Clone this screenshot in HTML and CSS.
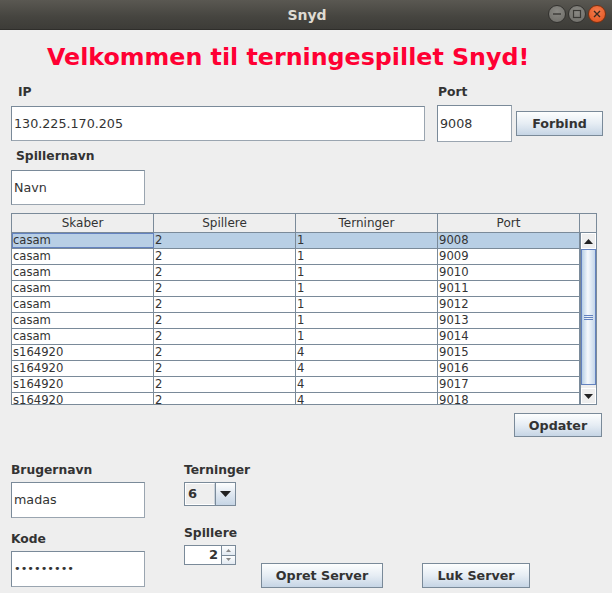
FILE: index.html
```html
<!DOCTYPE html>
<html>
<head>
<meta charset="utf-8">
<link rel="stylesheet" href="styles.css">
</head>
<body>
<div class="window">
  <div class="titlebar">
    <span class="title">Snyd</span>
    <div class="wbtns">
      <span class="wbtn"><svg width="10" height="10" viewBox="0 0 10 10"><path d="M1 5h8" stroke="#3a3935" stroke-width="1.4"/></svg></span>
      <span class="wbtn"><svg width="10" height="10" viewBox="0 0 10 10"><rect x="1.5" y="1.5" width="7" height="7" fill="none" stroke="#3a3935" stroke-width="1.2"/></svg></span>
      <span class="wbtn close"><svg width="10" height="10" viewBox="0 0 10 10"><path d="M2 2l6 6M8 2l-6 6" stroke="#3a2a20" stroke-width="1.4"/></svg></span>
    </div>
  </div>
  <div class="content">
    <h1 class="heading">Velkommen til terningespillet Snyd!</h1>
    <div class="row labels1">
      <span class="lbl lbl-ip">IP</span>
      <span class="lbl lbl-port">Port</span>
    </div>
    <div class="row fields1">
      <div class="field f-ip">130.225.170.205</div>
      <div class="field f-port">9008</div>
      <button class="btn b-forbind">Forbind</button>
    </div>
    <div class="lbl lbl-spiller">Spillernavn</div>
    <div class="field f-navn">Navn</div>

    <div class="table">
      <div class="thead">
        <span class="th">Skaber</span><span class="th">Spillere</span><span class="th">Terninger</span><span class="th">Port</span><span class="th th-corner"></span>
      </div>
      <div class="tbody">
        <div class="rows">
          <div class="tr sel"><span class="td focus">casam</span><span class="td">2</span><span class="td">1</span><span class="td">9008</span></div>
          <div class="tr"><span class="td">casam</span><span class="td">2</span><span class="td">1</span><span class="td">9009</span></div>
          <div class="tr"><span class="td">casam</span><span class="td">2</span><span class="td">1</span><span class="td">9010</span></div>
          <div class="tr"><span class="td">casam</span><span class="td">2</span><span class="td">1</span><span class="td">9011</span></div>
          <div class="tr"><span class="td">casam</span><span class="td">2</span><span class="td">1</span><span class="td">9012</span></div>
          <div class="tr"><span class="td">casam</span><span class="td">2</span><span class="td">1</span><span class="td">9013</span></div>
          <div class="tr"><span class="td">casam</span><span class="td">2</span><span class="td">1</span><span class="td">9014</span></div>
          <div class="tr"><span class="td">s164920</span><span class="td">2</span><span class="td">4</span><span class="td">9015</span></div>
          <div class="tr"><span class="td">s164920</span><span class="td">2</span><span class="td">4</span><span class="td">9016</span></div>
          <div class="tr"><span class="td">s164920</span><span class="td">2</span><span class="td">4</span><span class="td">9017</span></div>
          <div class="tr"><span class="td">s164920</span><span class="td">2</span><span class="td">4</span><span class="td">9018</span></div>
        </div>
        <div class="scrollbar">
          <div class="sb-btn"><svg width="9" height="5" viewBox="0 0 9 5"><path d="M0 5L4.5 0L9 5Z" fill="#222"/></svg></div>
          <div class="sb-track">
            <div class="sb-thumb"><span class="grip"></span></div>
          </div>
          <div class="sb-btn"><svg width="9" height="5" viewBox="0 0 9 5"><path d="M0 0L4.5 5L9 0Z" fill="#222"/></svg></div>
        </div>
      </div>
    </div>

    <div class="row opd-row">
      <button class="btn b-opdater">Opdater</button>
    </div>

    <div class="row bottom">
      <div class="col col-left">
        <div class="lbl lbl-bruger">Brugernavn</div>
        <div class="field f-small">madas</div>
        <div class="lbl lbl-kode">Kode</div>
        <div class="field f-small f-pass">•••••••••</div>
      </div>
      <div class="col col-mid">
        <div class="lbl lbl-tern">Terninger</div>
        <div class="combo"><span class="combo-val">6</span><span class="combo-btn"><svg width="11" height="6" viewBox="0 0 11 6"><path d="M0 0L5.5 6L11 0Z" fill="#222"/></svg></span></div>
        <div class="lbl lbl-spil">Spillere</div>
        <div class="spinner"><span class="spin-val">2</span><span class="spin-btns"><span class="spin-b"><svg width="5" height="3" viewBox="0 0 5 3"><path d="M0 3L2.5 0L5 3Z" fill="#888"/></svg></span><span class="spin-b spin-b2"><svg width="5" height="3" viewBox="0 0 5 3"><path d="M0 0L2.5 3L5 0Z" fill="#888"/></svg></span></span></div>
      </div>
      <div class="col col-btns">
        <button class="btn b-opret">Opret Server</button>
        <button class="btn b-luk">Luk Server</button>
      </div>
    </div>
  </div>
</div>
</body>
</html>
```
FILE: styles.css
```css
* { box-sizing: border-box; }
html, body { margin: 0; padding: 0; }
body { width: 612px; height: 593px; overflow: hidden; font-family: "DejaVu Sans", sans-serif; color: #333; }
.window { width: 612px; height: 593px; display: flex; flex-direction: column; }
.titlebar {
  height: 30px; flex: none; position: relative;
  background: linear-gradient(#5a5852, #45443f 60%, #3d3c38);
  display: flex; align-items: center; justify-content: center;
  border-bottom: 1px solid #2f2e2b;
}
.title { font-weight: bold; font-size: 14px; color: #dfdbd2; margin-left: 2px; }
.wbtns { position: absolute; right: 6px; top: 5px; display: flex; gap: 2px; }
.wbtn {
  width: 18px; height: 18px; border-radius: 50%;
  background: radial-gradient(circle at 50% 35%, #8a8984, #6c6b66);
  border: 1px solid #33322f;
  display: flex; align-items: center; justify-content: center;
}
.wbtn.close { background: radial-gradient(circle at 50% 35%, #f37d4f, #e2501a); border-color: #7a3010; }
.content { flex: 1; background: #eeeeee; position: relative; }
.heading {
  margin: 0; padding: 11px 0 0 47px; height: 54px;
  font-size: 23.75px; font-weight: bold; color: #ff0033; line-height: 32px;
}
.row { display: flex; }
.lbl { font-weight: bold; font-size: 12.3px; line-height: 16px; color: #333; }
.labels1 { height: 21px; }
.lbl-ip { margin-left: 18px; width: 420px; }
.lbl-port { margin-left: 0; }
.field {
  background: #fff; border: 1px solid #7a8a99; border-right-color: #9aa5b0; border-bottom-color: #9aa5b0;
  font-size: 12.7px; line-height: 16px; color: #333; padding-left: 2px;
  display: flex; align-items: center;
}
.fields1 { height: 37px; align-items: flex-start; }
.f-ip { margin-left: 11px; width: 414px; height: 35px; margin-top: 1px; }
.f-port { margin-left: 12px; width: 75px; height: 37px; }
.btn {
  font-family: "DejaVu Sans", sans-serif; font-weight: bold; font-size: 12.7px; color: #333;
  background: linear-gradient(#fdfefe, #e6edf4 50%, #c6d5e5);
  border: 1px solid #7a8a99; padding: 0; margin: 0;
}
.b-forbind { margin-left: 4px; width: 87px; height: 25px; margin-top: 6px; }
.lbl-spiller { margin: 6px 0 0 16px; height: 16px; }
.f-navn { margin: 6px 0 0 11px; width: 134px; height: 35px; }

.table { margin: 8px 0 0 11px; width: 586px; height: 192px; border: 1px solid #7a8a99; display: flex; flex-direction: column; background: #fff; }
.thead { display: flex; height: 19px; flex: none; background: #eeeeee; border-bottom: 1px solid #7a8a99; }
.th { width: 142px; font-size: 12px; line-height: 18px; text-align: center; border-right: 1px solid #7a8a99; color: #333; }
.th-corner { width: 16px; border-right: none; }
.tbody { flex: 1; display: flex; overflow: hidden; }
.rows { width: 568px; overflow: hidden; }
.tr { display: flex; height: 16px; border-bottom: 1px solid #7a8a99; }
.td { width: 142px; font-size: 11.6px; line-height: 15px; padding-left: 1px; border-right: 1px solid #7a8a99; color: #333; }
.tr.sel { background: #b8cfe5; }
.td.focus { border: 1px solid #6382bf; line-height: 13px; padding-left: 0; }
.scrollbar { width: 16px; display: flex; flex-direction: column; background: #eeeeee; border-left: 1px solid #7a8a99; }
.sb-btn { height: 16px; flex: none; display: flex; align-items: center; justify-content: center; background: #eeeeee; border: 1px solid #fff; }
.sb-track { flex: 1; padding: 0 0 3px 0; display: flex; flex-direction: column; }
.sb-thumb {
  flex: 1; border: 1px solid #6382bf;
  background: linear-gradient(90deg, #b8cfe5, #f6f9fc 45%, #c4d6ea);
  display: flex; align-items: center; justify-content: center;
}
.grip { width: 9px; height: 5px; border-top: 1px solid #6382bf; border-bottom: 1px solid #6382bf; position: relative; }
.grip::after { content: ""; position: absolute; left: 0; right: 0; top: 1px; height: 1px; background: #6382bf; }

.opd-row { justify-content: flex-end; padding-right: 10px; margin-top: 8px; }
.b-opdater { width: 88px; height: 24px; }

.bottom { margin-top: 25px; align-items: flex-start; }
.col { display: flex; flex-direction: column; }
.col-left { margin-left: 11px; width: 134px; }
.lbl-bruger { height: 16px; }
.f-small { width: 134px; height: 36px; margin-top: 4px; }
.lbl-kode { margin-top: 13px; height: 16px; }
.f-pass { margin-top: 4px; font-size: 11.3px; letter-spacing: 0; }
.col-mid { margin-left: 39px; width: 60px; }
.lbl-tern { height: 16px; }
.combo { margin-top: 4px; width: 52px; height: 24px; display: flex; border: 1px solid #7a8a99; background: #eeeeee; }
.combo-val { flex: 1; font-weight: bold; font-size: 13px; line-height: 20px; padding-left: 2px; border: 1px solid #fff; border-right-color: #c9d2db; }
.combo-btn { width: 20px; display: flex; align-items: center; justify-content: center; background: linear-gradient(#fdfefe, #dfe7f0 50%, #c6d5e5); border-left: 1px solid #7a8a99; }
.lbl-spil { margin-top: 19px; height: 16px; }
.spinner { margin-top: 4px; width: 52px; height: 20px; display: flex; border: 1px solid #7a8a99; background: #fff; }
.spin-val { flex: 1; text-align: right; font-weight: bold; font-size: 13px; line-height: 18px; padding-right: 3px; }
.spin-btns { width: 14px; display: flex; flex-direction: column; border-left: 1px solid #7a8a99; }
.spin-b { flex: 1; display: flex; align-items: center; justify-content: center; background: linear-gradient(#fdfefe, #e2e9f1); }
.spin-b2 { border-top: 1px solid #7a8a99; }
.col-btns { flex-direction: row; margin-left: 17px; margin-top: 101px; }
.b-opret { width: 122px; height: 25px; }
.b-luk { width: 108px; height: 25px; margin-left: 39px; }
```
